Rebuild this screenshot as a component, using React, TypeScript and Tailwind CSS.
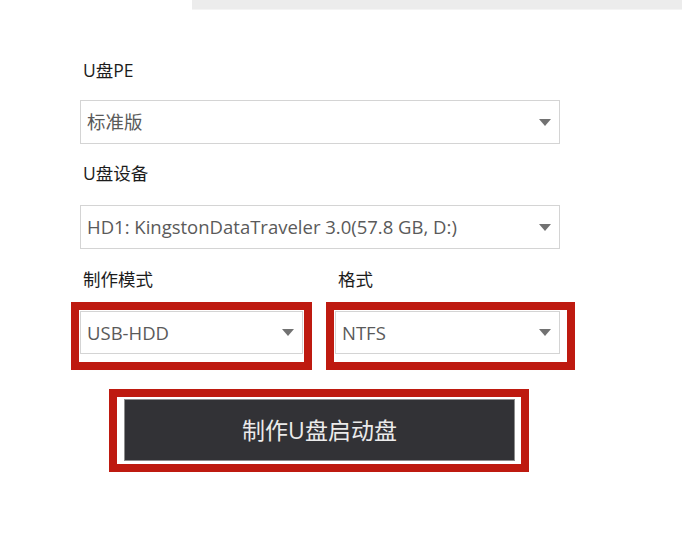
import React from "react";

const font = {
  fontFamily: '"Open Sans", "Noto Sans CJK SC", sans-serif',
};

const Caret = () => (
  <svg width="12" height="7" viewBox="0 0 12 7" className="shrink-0">
    <path d="M0 0 L12 0 L6 7 Z" fill="#727272" />
  </svg>
);

const Select = ({ value, className }: { value: string; className: string }) => (
  <div
    className={`flex items-center justify-between border border-[#d4d4d4] bg-white pl-[6px] pr-[8px] ${className}`}
  >
    <span className="text-[18.5px] text-[#5a5a5a] whitespace-nowrap">{value}</span>
    <Caret />
  </div>
);

const Label = ({ text, className = "" }: { text: string; className?: string }) => (
  <div className={`h-[22px] leading-[22px] text-[17.5px] font-normal text-[#1c1c1c] ${className}`}>{text}</div>
);

export default function App() {
  return (
    <div className="w-[682px] h-[542px] bg-white overflow-hidden" style={font}>
      <div className="ml-[192px] h-[10px] bg-[#ececec] border-b border-[#f4f4f4]" />

      <div className="pl-[80px]">
        <Label text="U盘PE" className="mt-[49px] pl-[3px]" />
        <Select value="标准版" className="mt-[19px] w-[480px] h-[44px]" />

        <Label text="U盘设备" className="mt-[18px] pl-[3px]" />
        <Select
          value="HD1: KingstonDataTraveler 3.0(57.8 GB, D:)"
          className="mt-[21px] w-[480px] h-[44px]"
        />

        <div className="mt-[19px] flex">
          <Label text="制作模式" className="w-[255px] pl-[3px]" />
          <Label text="格式" className="pl-[3px]" />
        </div>

        <div className="mt-[12px] ml-[-9px] flex gap-[14px]">
          <div className="w-[241px] h-[68px] border-[8px] border-[#be1a10] pl-[1px] pt-[1px]">
            <Select value="USB-HDD" className="w-[223px] h-[43px]" />
          </div>
          <div className="w-[249px] h-[68px] border-[8px] border-[#be1a10] pl-[1px] pt-[1px]">
            <Select value="NTFS" className="w-[225px] h-[43px]" />
          </div>
        </div>

        <div className="mt-[19px] ml-[29px] w-[420px] h-[83px] border-[8px] border-[#be1a10] pl-[7px] pr-[6px] pt-[2px] pb-[3px]">
          <button className="w-full h-full bg-[#323236] border border-[#8c8c8c] text-[#ebebeb] text-[23px]">
            制作U盘启动盘
          </button>
        </div>
      </div>
    </div>
  );
}
